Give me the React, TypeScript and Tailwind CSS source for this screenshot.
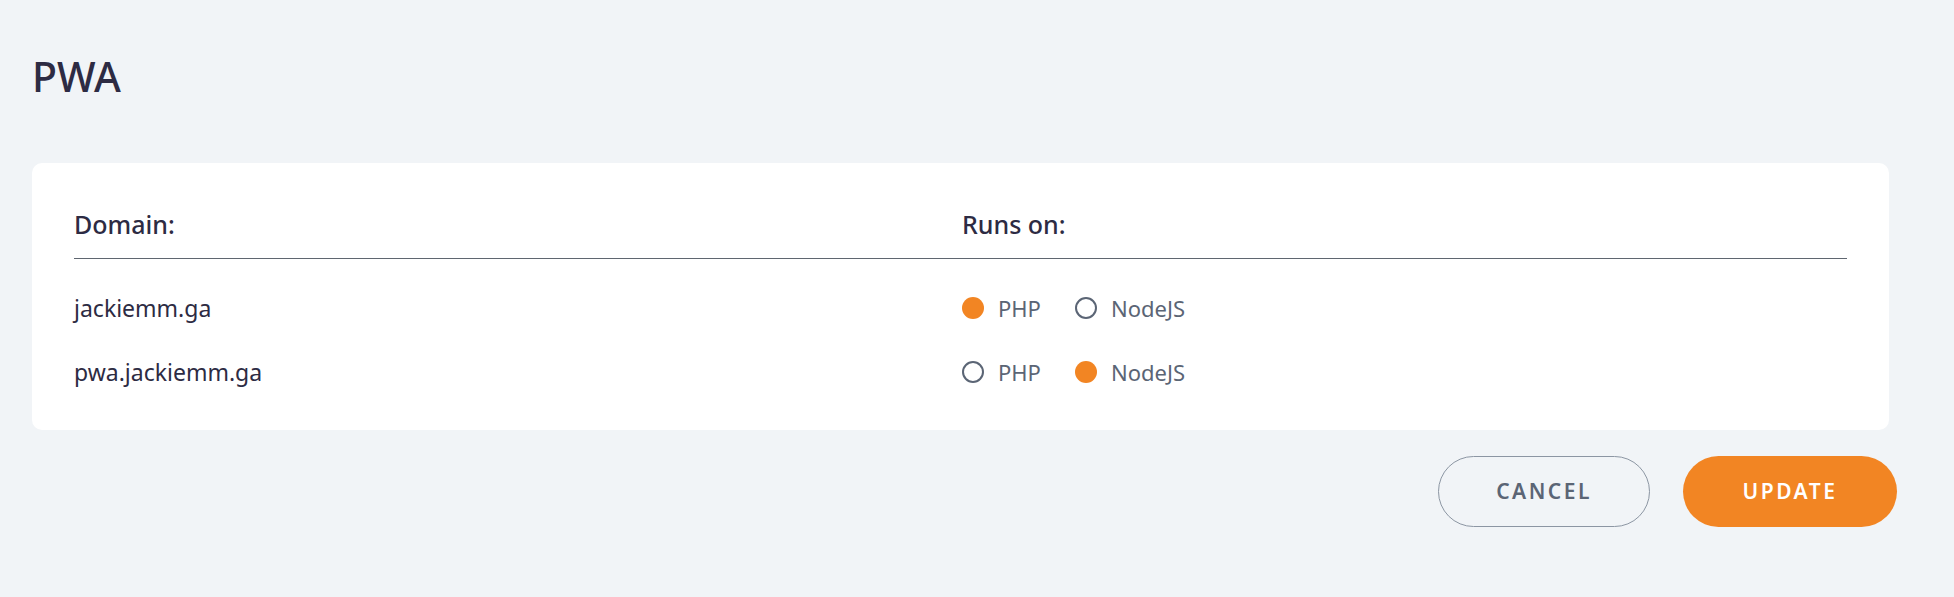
const rows = [
  { domain: "jackiemm.ga", runsOn: "php" },
  { domain: "pwa.jackiemm.ga", runsOn: "node" },
];

function Radio({ checked, label }: { checked: boolean; label: string }) {
  return (
    <label className="flex items-center gap-[14px] cursor-pointer">
      {checked ? (
        <span className="w-[22px] h-[22px] rounded-full bg-[#f28523]" />
      ) : (
        <span className="w-[22px] h-[22px] rounded-full border-2 border-[#5b6575]" />
      )}
      <span className="text-[22px] text-[#5b6575]">{label}</span>
    </label>
  );
}

export default function App() {
  return (
    <div
      className="w-[1954px] h-[597px] bg-[#f1f4f7] text-[#2d2b43] pl-[32px]"
      style={{ fontFamily: '"Noto Sans", "Open Sans", sans-serif' }}
    >
      <h1 className="pt-[46px] text-[41px] leading-[60px] font-medium">PWA</h1>

      <div className="mt-[57px] w-[1857px] bg-white rounded-[10px] pl-[42px] pr-[42px] pt-[44px] pb-[26px]">
        <div className="grid grid-cols-[888px_1fr] border-b border-[#5f6670] pb-[17px]">
          <div className="text-[25px] font-medium leading-[34px]">Domain:</div>
          <div className="text-[25px] font-medium leading-[34px]">Runs on:</div>
        </div>

        <div className="pt-[17px]">
          {rows.map((r) => (
            <div key={r.domain} className="grid grid-cols-[888px_1fr] h-[64px] items-center">
              <div className="text-[23px]">{r.domain}</div>
              <div className="flex items-center gap-[34px]">
                <Radio checked={r.runsOn === "php"} label="PHP" />
                <Radio checked={r.runsOn === "node"} label="NodeJS" />
              </div>
            </div>
          ))}
        </div>
      </div>

      <div className="w-[1865px] flex justify-end gap-[33px] mt-[26px]">
        <button className="w-[212px] h-[71px] rounded-full border border-[#8c96a3] text-[#5b6575] text-[21px] font-semibold tracking-[2.5px]">
          CANCEL
        </button>
        <button className="w-[214px] h-[71px] rounded-full bg-[#f28523] text-white text-[21px] font-semibold tracking-[2.5px]">
          UPDATE
        </button>
      </div>
    </div>
  );
}
